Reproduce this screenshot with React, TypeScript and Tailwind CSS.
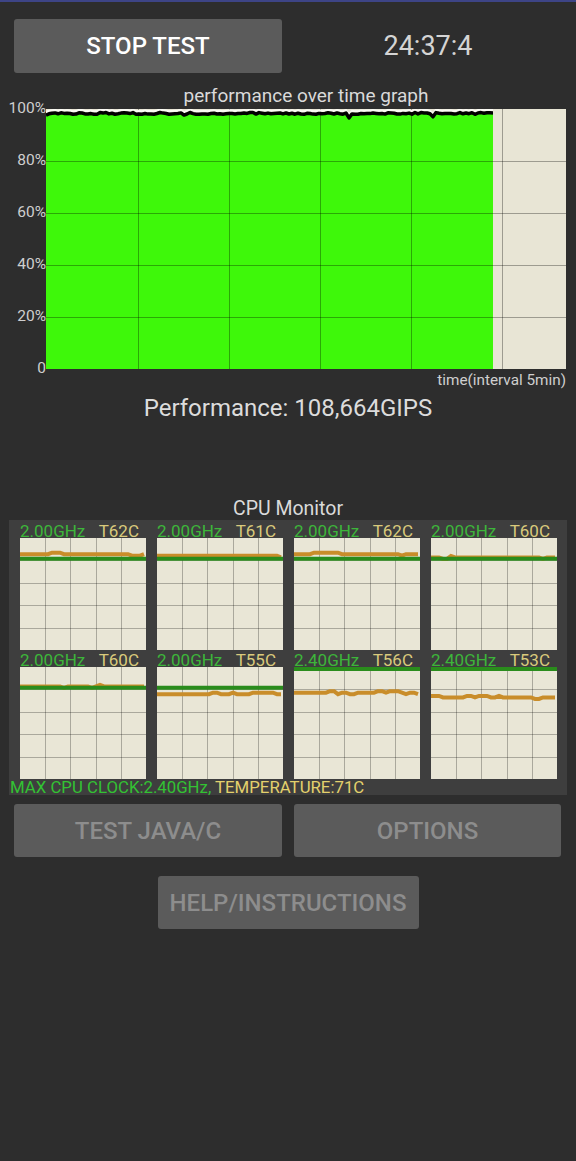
import React from "react";

function mulberry32(a: number) {
  return function () {
    a |= 0;
    a = (a + 0x6d2b79f5) | 0;
    let t = Math.imul(a ^ (a >>> 15), 1 | a);
    t = (t + Math.imul(t ^ (t >>> 7), 61 | t)) ^ t;
    return ((t ^ (t >>> 14)) >>> 0) / 4294967296;
  };
}

const PW = 520;
const PH = 260;
const GREEN_W = 447;

function mainTopPoints(): [number, number][] {
  const r = mulberry32(7);
  const pts: [number, number][] = [];
  for (let x = 0; x <= GREEN_W; x += 3) {
    const a = r();
    const b = r();
    let y = 3.5 + b * 1.8;
    if (a < 0.07) y = 6 + b * 4;
    pts.push([x, y]);
  }
  return pts;
}

function MainGraph() {
  const pts = mainTopPoints();
  const line = pts.map((p) => `${p[0]},${p[1].toFixed(1)}`).join(" ");
  const poly = `0,${PH} ${line} ${GREEN_W},${PH}`;
  const vlines = [92, 183, 274, 365, 456];
  const hlines = [52, 104, 156, 208];
  return (
    <svg width={PW} height={PH} viewBox={`0 0 ${PW} ${PH}`} className="block">
      <rect x={0} y={0} width={PW} height={PH} fill="#e8e5d5" />
      <polygon points={poly} fill="#3ef80a" />
      {hlines.map((y) => (
        <line key={"h" + y} x1={0} x2={PW} y1={y + 0.5} y2={y + 0.5} stroke="rgba(0,0,0,0.32)" strokeWidth={1} />
      ))}
      {vlines.map((x) => (
        <line key={"v" + x} x1={x + 0.5} x2={x + 0.5} y1={0} y2={PH} stroke="rgba(0,0,0,0.32)" strokeWidth={1} />
      ))}
      <polyline points={pts.map((p) => `${p[0]},${(p[1] - 3).toFixed(1)}`).join(" ")} fill="none" stroke="#fbfbf5" strokeWidth={2} />
      <polyline points={line} fill="none" stroke="#000" strokeWidth={3.5} strokeLinejoin="round" />
    </svg>
  );
}

const CW = 126;
const CH = 112;

function stepLine(seed: number, base: number, noise: number): string {
  const r = mulberry32(seed);
  const pts: string[] = [];
  let y = base;
  for (let x = 0; x <= CW; x += 4) {
    const a = r();
    if (a < noise * 0.6) y = base - 1.5;
    else if (a < noise) y = base + 1.5;
    else if (a < noise + 0.35) y = base;
    pts.push(`${x},${y.toFixed(1)}`);
  }
  return pts.join(" ");
}

function CpuCell({ ghz, temp, seed, noise }: { ghz: number; temp: number; seed: number; noise: number }) {
  const gy = CH - (ghz / 2.4) * CH + 2;
  const ty = CH - (temp / 71) * CH + 2;
  const vls = [25, 50, 76, 101];
  const hls = [22, 45, 67, 90];
  return (
    <div className="flex flex-col w-[126px]">
      <div className="h-[17px] leading-[20px] flex justify-between pr-[7px] text-[17px] whitespace-nowrap">
        <span className="text-[#3db53a]">{ghz.toFixed(2)}GHz</span>
        <span className="text-[#d9ca7c]">T{temp}C</span>
      </div>
      <svg width={CW} height={CH} viewBox={`0 0 ${CW} ${CH}`} className="block">
        <rect x={0} y={0} width={CW} height={CH} fill="#e9e6d6" />
        {hls.map((y) => (
          <line key={"h" + y} x1={0} x2={CW} y1={y + 0.5} y2={y + 0.5} stroke="rgba(0,0,0,0.27)" strokeWidth={1} />
        ))}
        {vls.map((x) => (
          <line key={"v" + x} x1={x + 0.5} x2={x + 0.5} y1={0} y2={CH} stroke="rgba(0,0,0,0.27)" strokeWidth={1} />
        ))}
        <polyline points={stepLine(seed, ty, noise)} fill="none" stroke="#c98d2a" strokeWidth={4} />
        <line x1={0} x2={CW} y1={gy} y2={gy} stroke="#2a8c1c" strokeWidth={4} />
      </svg>
    </div>
  );
}

const row1 = [
  { ghz: 2.0, temp: 62 },
  { ghz: 2.0, temp: 61 },
  { ghz: 2.0, temp: 62 },
  { ghz: 2.0, temp: 60 },
];
const row2 = [
  { ghz: 2.0, temp: 60 },
  { ghz: 2.0, temp: 55 },
  { ghz: 2.4, temp: 56 },
  { ghz: 2.4, temp: 53 },
];

export default function App() {
  return (
    <div className="w-[576px] h-[1161px] bg-[#2d2d2d] font-['Roboto',sans-serif] overflow-hidden">
      <div className="h-[2px] bg-[#3d4486]" />
      <div className="flex items-center mt-[17px] pl-[14px]">
        <div className="w-[268px] h-[54px] rounded-[3px] bg-[#5b5b5b] flex items-center justify-center text-white text-[24px] font-medium">
          STOP TEST
        </div>
        <div className="flex-1 text-center text-[#d4d4d4] text-[27px] leading-[30px] pr-[2px]">24:37:4</div>
      </div>

      <div className="mt-[13px] flex">
        <div className="w-[46px]" />
        <div className="w-[520px] text-center text-[#dadada] text-[19px] leading-[20px]">performance over time graph</div>
      </div>

      <div className="mt-[3px] flex">
        <div className="w-[46px] h-[260px] flex flex-col justify-between text-[15.5px] text-[#cfcfcf]">
          {["100%", "80%", "60%", "40%", "20%", "0"].map((l) => (
            <div key={l} className="h-0 flex items-center justify-end">
              {l}
            </div>
          ))}
        </div>
        <MainGraph />
      </div>

      <div className="w-[566px] text-right text-[15.3px] leading-[16px] text-[#cfcfcf] mt-[3px]">time(interval 5min)</div>
      <div className="mt-[7px] text-center text-[24px] leading-[26px] text-[#dcdcdc]">Performance: 108,664GIPS</div>

      <div className="mt-[78px] text-center text-[19.5px] leading-[20px] text-[#dadada]">CPU Monitor</div>

      <div className="mt-[1px] ml-[9px] w-[558px] h-[275px] bg-[#3e3e3e] pt-[1px]">
        <div className="flex gap-[11px] pl-[11px]">
          {row1.map((c, i) => (
            <CpuCell key={i} ghz={c.ghz} temp={c.temp} seed={10 + i} noise={0.06} />
          ))}
        </div>
        <div className="flex gap-[11px] pl-[11px]">
          {row2.map((c, i) => (
            <CpuCell key={i} ghz={c.ghz} temp={c.temp} seed={20 + i} noise={0.18} />
          ))}
        </div>
        <div className="pl-[1px] text-[16.8px] leading-[16px] whitespace-nowrap">
          <span className="text-[#33c233]">MAX CPU CLOCK:2.40GHz, </span>
          <span className="text-[#e3d16c]">TEMPERATURE:71C</span>
        </div>
      </div>

      <div className="mt-[9px] flex gap-[12px] pl-[14px]">
        <div className="w-[268px] h-[53px] rounded-[3px] bg-[#5b5b5b] flex items-center justify-center text-[#8d8d8d] text-[24px] font-medium">
          TEST JAVA/C
        </div>
        <div className="w-[267px] h-[53px] rounded-[3px] bg-[#5b5b5b] flex items-center justify-center text-[#8d8d8d] text-[24px] font-medium">
          OPTIONS
        </div>
      </div>
      <div className="mt-[19px] flex justify-center">
        <div className="w-[261px] h-[53px] rounded-[3px] bg-[#5b5b5b] flex items-center justify-center text-[#8d8d8d] text-[24px] font-medium">
          HELP/INSTRUCTIONS
        </div>
      </div>
    </div>
  );
}
